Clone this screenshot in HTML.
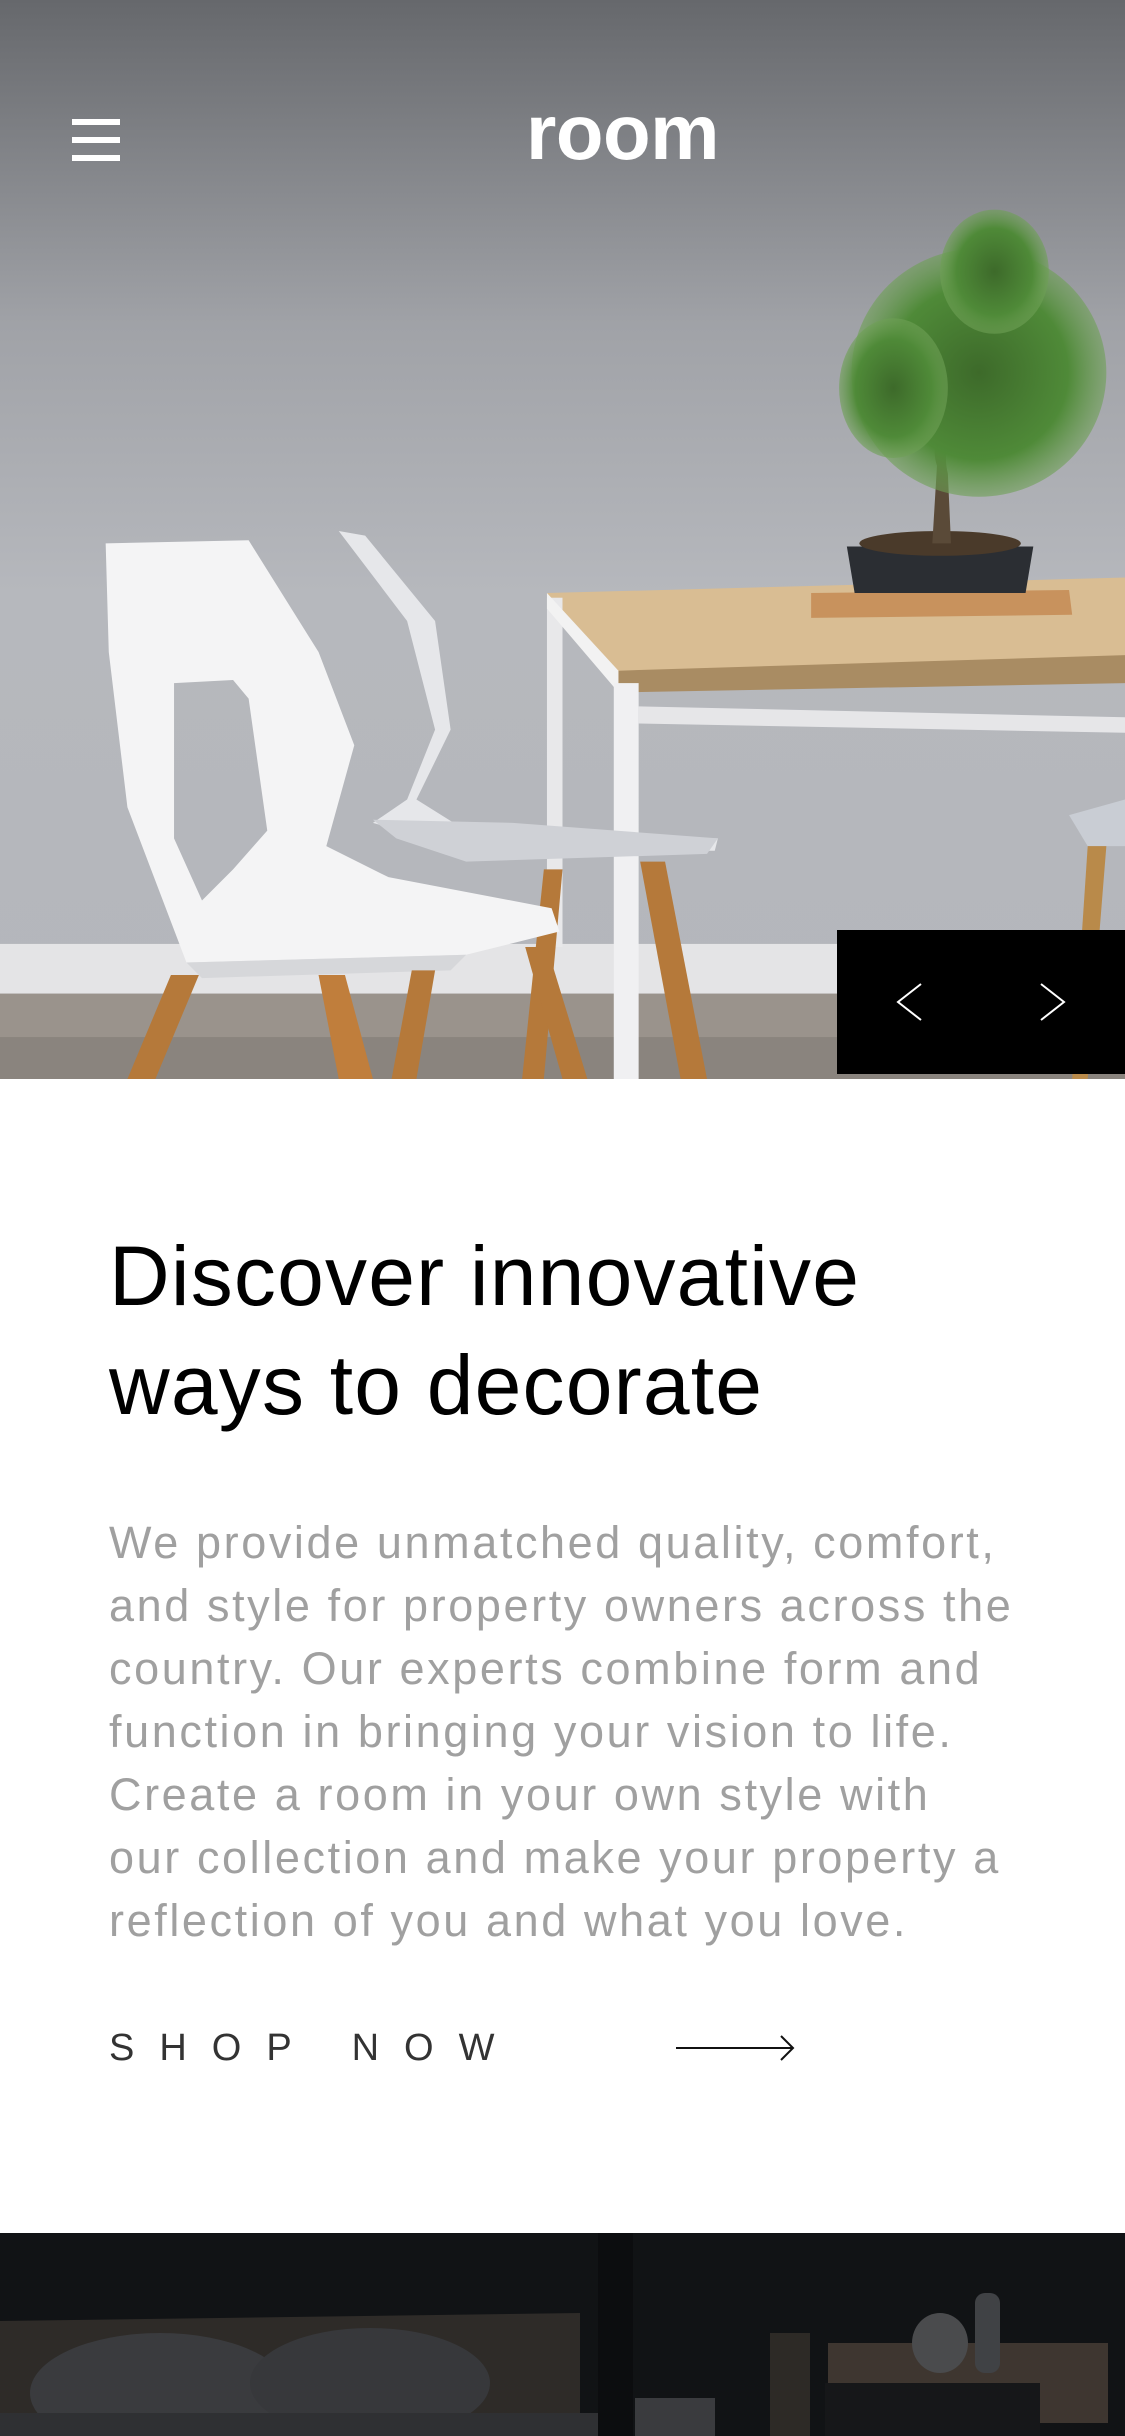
<!DOCTYPE html>
<html><head><meta charset="utf-8"><style>
html,body{margin:0;padding:0;}
body{width:1125px;height:2436px;overflow:hidden;background:#fff;font-family:"Liberation Sans",sans-serif;position:relative;}
.hero{position:absolute;left:0;top:0;width:1125px;height:1079px;}
.ham{position:absolute;left:72px;width:48px;height:6px;background:#fff;}
.logo{position:absolute;left:526px;top:86px;font-size:78px;font-weight:bold;color:#fff;line-height:92px;letter-spacing:-0.5px;}
.nav{position:absolute;left:837px;top:930px;width:288px;height:144px;background:#000;}
h1{position:absolute;left:109px;top:1222px;margin:0;font-weight:normal;font-size:84px;line-height:109px;color:#000;white-space:nowrap;letter-spacing:1.2px;}
.p{position:absolute;left:109px;top:1511px;font-size:45px;line-height:63px;color:#a0a0a0;white-space:nowrap;letter-spacing:2.6px;}
.shop{position:absolute;left:109px;top:2026px;font-size:38px;line-height:44px;color:#333;letter-spacing:25px;white-space:nowrap;}
.dark{position:absolute;left:0;top:2233px;width:1125px;height:203px;background:#111315;overflow:hidden;}
</style></head><body>
<svg class="hero" viewBox="0 0 724 695" preserveAspectRatio="none" width="1125" height="1079">
<defs>
<linearGradient id="wall" x1="0" y1="0" x2="0" y2="1">
<stop offset="0" stop-color="#66686c"/><stop offset="0.3" stop-color="#a0a2a7"/><stop offset="0.55" stop-color="#b6b8bd"/><stop offset="1" stop-color="#b4b6bb"/>
</linearGradient>
<radialGradient id="tree" cx="0.5" cy="0.5" r="0.5"><stop offset="0" stop-color="#3d6a2a"/><stop offset="0.7" stop-color="#4f8a38"/><stop offset="1" stop-color="#6ea055" stop-opacity="0.6"/></radialGradient>
</defs>
<rect width="724" height="695" fill="url(#wall)"/>
<rect y="608" width="724" height="32" fill="#e4e4e6"/>
<rect y="640" width="724" height="55" fill="#9a938c"/>
<rect y="668" width="724" height="27" fill="#8a847e"/>
<polygon points="352,382 724,372 724,428 398,440" fill="#d9bd93"/>
<polygon points="398,432 724,422 724,440 398,446" fill="#a98c63"/>
<rect x="352" y="385" width="10" height="225" fill="#e8e8ea"/>
<polygon points="352,382 398,432 398,446 352,392" fill="#f2f2f2"/>
<rect x="395" y="440" width="16" height="255" fill="#f0f0f2"/>
<polygon points="411,455 724,462 724,472 411,466" fill="#e6e6e8"/>
<polygon points="522,382 688,380 690,396 522,398" fill="#c8925d"/>
<polygon points="545,352 665,352 660,382 550,382" fill="#2b2e33"/>
<ellipse cx="605" cy="350" rx="52" ry="8" fill="#4a3a2a"/>
<path d="M600 350 L603 300 Q598 285 610 270 L615 272 Q606 290 610 305 L612 350Z" fill="#5a4a38"/>
<ellipse cx="630" cy="240" rx="82" ry="80" fill="url(#tree)"/>
<ellipse cx="640" cy="175" rx="35" ry="40" fill="url(#tree)"/>
<ellipse cx="575" cy="250" rx="35" ry="45" fill="url(#tree)"/>
<polygon points="688,525 724,515 724,545 700,545" fill="#c9cdd4"/>
<polygon points="700,545 712,545 700,695 690,695" fill="#b98a4a"/>
<polygon points="218,342 262,400 280,470 262,515 240,530 300,548 460,548 462,540 300,535 268,515 290,470 280,400 235,345" fill="#e6e7ea"/>
<polygon points="240,528 330,530 462,540 455,550 300,555 255,540" fill="#cfd1d6"/>
<polygon points="412,555 428,555 455,695 438,695" fill="#b5793a"/>
<polygon points="350,560 362,560 350,695 336,695" fill="#b5793a"/>
<path d="M68 350 L160 348 L205 420 L228 480 L210 545 L250 565 L355 585 L360 600 L300 615 L120 620 L82 520 L70 420 Z M112 440 L112 540 L130 580 L150 560 L172 535 L160 450 L150 438 Z" fill="#f4f4f5" fill-rule="evenodd"/>
<polygon points="120,620 300,615 290,625 130,630" fill="#d6d7da"/>
<polygon points="110,628 128,628 100,695 82,695" fill="#b5793a"/>
<polygon points="205,628 222,628 240,695 218,695" fill="#c07e3c"/>
<polygon points="265,625 280,625 268,695 252,695" fill="#b5793a"/>
<polygon points="338,610 352,610 378,695 362,695" fill="#b5793a"/>
</svg>
<div class="ham" style="top:119px"></div>
<div class="ham" style="top:137px"></div>
<div class="ham" style="top:155px"></div>
<div class="logo">room</div>
<div class="nav">
<svg width="288" height="144" viewBox="0 0 288 144"><path d="M84 54 L61 72 L84 90" stroke="#fff" stroke-width="2" fill="none"/><path d="M204 54 L227 72 L204 90" stroke="#fff" stroke-width="2" fill="none"/></svg>
</div>
<h1>Discover innovative<br>ways to decorate</h1>
<div class="p">We provide unmatched quality, comfort,<br>and style for property owners across the<br>country. Our experts combine form and<br>function in bringing your vision to life.<br>Create a room in your own style with<br>our collection and make your property a<br>reflection of you and what you love.</div>
<div class="shop">SHOP NOW</div>
<svg style="position:absolute;left:675px;top:2033px" width="122" height="30" viewBox="0 0 122 30"><path d="M1 15 H118 M106 3 L118 15 L106 27" stroke="#111" stroke-width="2" fill="none"/></svg>
<div class="dark">
<svg width="1125" height="203" viewBox="0 0 1125 203">
<polygon points="0,88 580,80 580,180 0,190" fill="#2e2b28"/>
<ellipse cx="160" cy="160" rx="130" ry="60" fill="#3a3b3e"/>
<ellipse cx="370" cy="150" rx="120" ry="55" fill="#37383b"/>
<rect x="0" y="180" width="600" height="30" fill="#2f3033"/>
<rect x="598" y="0" width="35" height="203" fill="#0c0d0f"/>
<rect x="635" y="165" width="80" height="40" fill="#3a3b3e"/>
<rect x="770" y="100" width="40" height="103" fill="#2d2a26"/>
<rect x="828" y="110" width="280" height="80" fill="#3e3630"/>
<rect x="825" y="150" width="215" height="53" fill="#161719"/>
<ellipse cx="940" cy="110" rx="28" ry="30" fill="#4a4b4d"/>
<rect x="975" y="60" width="25" height="80" rx="10" fill="#404245"/>
</svg>
</div>
</body></html>
